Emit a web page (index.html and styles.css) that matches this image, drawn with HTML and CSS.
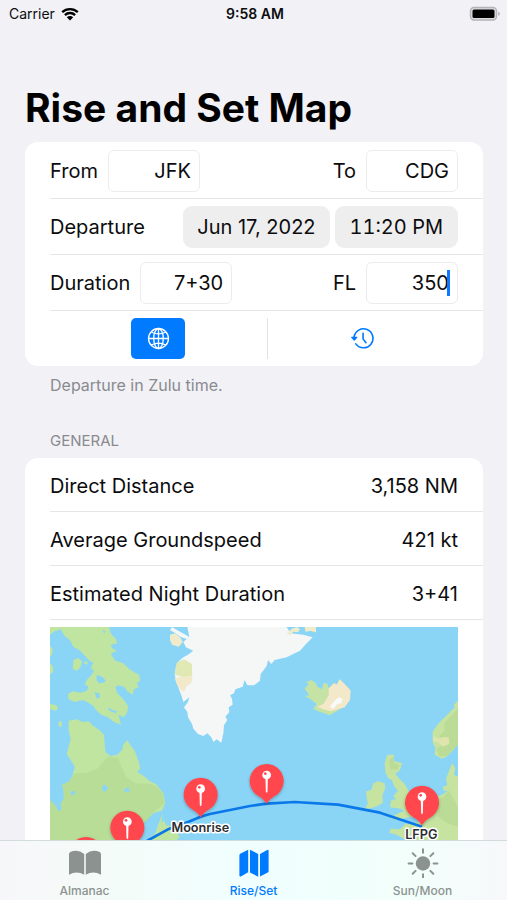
FILE: index.html
```html
<!DOCTYPE html>
<html lang="en">
<head>
<meta charset="utf-8">
<meta name="viewport" content="width=device-width, initial-scale=1">
<title>Rise and Set Map</title>
<link rel="stylesheet" href="styles.css">
</head>
<body>
<div class="app">
  <header class="status">
    <div class="carrier">
      <span>Carrier</span>
      <svg class="wifi" viewBox="0 0 18 14" aria-hidden="true">
        <path d="M1.200 5.200a11.200 11.200 0 0 1 15.600 0M3.900 8.100a7.300 7.300 0 0 1 10.200 0" fill="none" stroke="#000" stroke-width="2.300"/>
        <path d="M5.800 10.300a4.600 4.600 0 0 1 6.400 0L9 13.600z"/>
      </svg>
    </div>
    <time class="clock">9:58 AM</time>
    <div class="power">
      <svg class="battery" viewBox="0 0 32 16" aria-hidden="true">
        <rect x="1.500" y="1.500" width="26" height="12.500" rx="3.500" fill="#dcdce0" stroke="#b4b4b7" stroke-width="1.400"/>
        <rect x="3.500" y="3.500" width="22" height="8.500" rx="1.500"/>
        <path d="M29.200 5.400q1.700.8 1.700 2.300t-1.700 2.300z" fill="#b4b4b7"/>
      </svg>
    </div>
  </header>

  <main class="content">
    <h1 class="title">Rise and Set Map</h1>

    <form class="card form">
      <div class="row">
        <label for="from">From</label>
        <input class="field" id="from" type="text" value="JFK">
        <label class="push" for="to">To</label>
        <input class="field" id="to" type="text" value="CDG">
      </div>
      <div class="row">
        <span>Departure</span>
        <div class="pickers push">
          <button class="picker" type="button">Jun 17, 2022</button>
          <button class="picker time" type="button">11:20 PM</button>
        </div>
      </div>
      <div class="row">
        <label for="duration">Duration</label>
        <input class="field" id="duration" type="text" value="7+30">
        <label class="push" for="level">FL</label>
        <span class="editing"><input class="field" id="level" type="text" value="350"></span>
      </div>
      <div class="modes">
        <div class="mode">
          <button class="icon-button selected" type="button" aria-label="Zulu time">
            <svg viewBox="0 0 24 24" aria-hidden="true">
              <g fill="none" stroke="currentColor" stroke-width="1.400">
                <circle cx="12" cy="12" r="10.400"/>
                <ellipse cx="12" cy="12" rx="5" ry="10.400"/>
                <path d="M12 1.600v20.800M1.600 12h20.800M4.400 5.200q7.600 4 15.200 0M4.400 18.800q7.600-4 15.200 0"/>
              </g>
            </svg>
          </button>
        </div>
        <div class="mode">
          <button class="icon-button" type="button" aria-label="History">
            <svg viewBox="0 0 24 24" aria-hidden="true">
              <path d="M3.200 10.600A9.900 9.900 0 1 1 5 17.600" fill="none" stroke="currentColor" stroke-width="1.700" stroke-linecap="round"/>
              <path d="M12.600 6.600v5.800l3 4" fill="none" stroke="currentColor" stroke-width="1.700" stroke-linecap="round" stroke-linejoin="round"/>
              <path d="M.6 10.200h5.600q.7.200.3.900l-2.600 3q-.5.500-1 0l-2.600-3q-.4-.7.300-.9z" fill="currentColor"/>
            </svg>
          </button>
        </div>
      </div>
    </form>
    <p class="note">Departure in Zulu time.</p>

    <h2 class="section">GENERAL</h2>
    <section class="card">
      <dl class="facts">
        <div class="row"><dt>Direct Distance</dt><dd>3,158 NM</dd></div>
        <div class="row"><dt>Average Groundspeed</dt><dd>421 kt</dd></div>
        <div class="row"><dt>Estimated Night Duration</dt><dd>3+41</dd></div>
      </dl>
      <div class="map-row">
        <svg class="map" viewBox="30 21 1224 900" role="img" aria-label="Route map">
          <defs>
            <filter id="shadow" x="-30%" y="-30%" width="160%" height="160%">
              <feDropShadow dx="0" dy="4" stdDeviation="5" flood-color="#234" flood-opacity=".35"/>
            </filter>
            <g id="pin">
              <path d="M0 0C-6-10-14-17-26-24A51 51 0 1 1 26-24C14-17 6-10 0 0z" fill="#ff474e" filter="url(#shadow)"/>
              <path d="M-3.500-76h7l-1 40q-2.500 5-5 0z" fill="#fff"/>
              <circle cy="-86" r="13" fill="#fff"/>
              <circle cx="-4" cy="-90" r="4" fill="#ff474e"/>
            </g>
          </defs>
          <rect x="30" y="21" width="1224" height="900" fill="#8ad5f6"/>

          <g fill="#c0e5a0">
            <path d="M30 21H207L212 40 228 58 232 70 212 75 216 84 230 92 212 102 226 122 250 130 268 148 298 165 300 182 290 190 296 202 282 208 278 224 262 214 252 200 236 196 226 200 232 220 250 238 264 258 262 276 252 292 236 284 243 314 222 306 204 292 184 284 168 270 160 258 142 246 128 240 104 246 86 238 84 222 98 214 122 218 140 212 146 200 134 192 142 178 152 168 162 152 152 144 160 128 146 120 130 102 118 90 100 80 90 60 74 48 62 28 44 34 30 44z"/>
            <path d="M100 120l14-6 12 10-4 16-10 12-14-6 2-16zM30 78l8 8-2 18-6 4zM30 130l8 8 2 18-10 6zM134 124l10 2-4 8-8-4zM30 252l20 4 4 10-8 6-16-6zM56 304l10 2-2 16-8-4z"/>
            <path d="M86 302L108 298 130 306 146 304 160 318 178 330 192 344 194 370 196 396 212 408 232 404 246 390 250 374 262 360 270 374 284 392 298 430 300 446 292 456 312 468 328 482 350 494 370 520 376 548 366 572 340 580 320 600 300 620 286 650 292 670 320 660 346 640 356 610 368 580 364 610 372 600 378 616 392 618 420 650 400 670 360 680 320 700 280 740 260 800 240 921H30V541L46 556 54 572 64 570 62 550 72 536 70 510 66 494 88 484 98 466 104 440 92 420 80 402 86 380 92 356 86 330z"/>
          </g>
          <path d="M104 460L140 458 172 446 188 426 206 410 234 414 244 440 258 470 286 490 330 492 350 500 370 524 374 548 340 578 290 640 250 760 220 921H30V541L46 556 54 572 64 570 62 550 72 536 70 510 66 494 88 484z" fill="#a9cf83" opacity=".35"/>
          <g fill="#8ad5f6">
            <path d="M170 164l16 6 12 12-8 6-14 2-6-10zM164 216l14 4 2 12-10 4zM186 498l10-4 8 10-8 12-8-4zM254 506l12-4 4 12-18 2zM92 514l14 0 0 8-12 4zM204 262l14 8 14 4-6 6-18-8zM188 30l8 4-4 8z"/>
            <path d="M276 664l34-46 14-16 12-6-16 26-28 48z"/>
          </g>

          <path d="M442 21L448 50 430 66 438 82 460 92 444 104 430 112 416 124 408 140 404 162 410 188 418 210 424 226 430 246 448 232 444 246 432 262 442 276 444 292 456 312 460 326 474 342 490 348 502 340 514 352 520 366 530 358 544 368 550 340 552 316 562 300 556 290 568 276 566 262 578 254 576 236 570 226 582 220 586 208 608 200 614 180 622 196 642 196 660 182 662 162 680 138 684 120 694 132 704 120 740 112 780 92 798 72 818 52 790 44 770 42 752 40 740 21z" fill="#f5f6f6"/>
          <path d="M396 21l16 10 26 14 10 6-8 6-18-6-16-12-16-8z" fill="#f5f6f6"/>
          <path d="M390 44l16-4 16 14 6 12-12 14-20-6-6-14z" fill="#f0eccb"/>
          <path d="M410 128l22-10 24 14v36l-26 4-26-8z" fill="#e0e8b4"/>
          <path d="M404 174l26-4 28-2-4 20-14 10-8 18-12-8-10-16z" fill="#f2e9ca"/>
          <path d="M738 42l18-16 14-5 10 6-6 10-14-2-8 10zM794 21h34v16l-16-4-16 2z" fill="#f0eccb"/>

          <path d="M794 206l12-14-8-6 16-6 14 10 4 10 14 8 4-18 12 0 4 14 16-16 10 6 4-16 14 12 20 18-2 30-16 22-20 12-22 14-36-12-14-8 10-14-18-14-18-10 14-2z" fill="#c4e3a5"/>
          <path d="M866 206l16-16 8 4 10-16 14 14 18 20-2 28-16 22-42 12-22-6-18-8 18-8 16-26z" fill="#f4e8cb"/>
          <path d="M870 260l14-18 12-10 12 4-4 14-12 2-12 14z" fill="#fafafa"/>

          <g fill="#c6e3a0">
            <path d="M1254 254L1236 270 1218 288 1196 310 1178 334 1178 366 1186 384 1184 404 1206 416 1222 408 1240 390 1254 372z"/>
            <path d="M1240 256l14-14v28zM1236 430l10 14-4 20 12 6v42H1212l-4-12 14-4-4-20 8-20z"/>
            <path d="M1042 404L1062 404 1060 422 1086 430 1080 450 1066 462 1078 476 1094 492 1110 520 1130 540 1148 560 1140 590 1106 592 1070 600 1050 594 1078 578 1092 574 1082 566 1050 562 1054 540 1068 538 1060 528 1074 512 1062 498 1056 480 1044 474 1036 456 1034 430z"/>
            <path d="M1000 490L1014 484 1034 490 1036 504 1028 524 1028 550 1004 562 974 568 984 550 980 534 978 514 994 510z"/>
            <path d="M1254 504L1230 508 1210 522 1190 530 1182 550 1170 568 1150 590 1142 604 1120 610 1096 612 1080 628 1052 626 1048 638 1070 644 1098 660 1110 690 1120 730 1110 800 1060 820 1050 921H1254z"/>
          </g>
          <path d="M1226 512l-16 20-18 4-6 18 10 36 24 20 34 10V560zM1212 310l42-46v110l-34 34-22 0-10-20 24-20-14-20 16-16z" fill="#b5d991" opacity=".65"/>
          <path d="M1180 348l16 8 12-4 18 0 2 20-20 8-12-12-16-4z" fill="#dfe4ad"/>
          <path d="M1048 420l12-10 2 18 16 8-8 12-20 0z" fill="#b5d991" opacity=".7"/>

          <path d="M120 800L200 740 326 660 384 628 444 606 482 590 510 582 630 558 680 551 764 546 894 554 1020 578 1146 620" fill="none" stroke="#0b78ea" stroke-width="8" stroke-linejoin="round"/>
          <use href="#pin" x="1146" y="616"/>
          <use href="#pin" x="680" y="551"/>
          <use href="#pin" x="482" y="592"/>
          <use href="#pin" x="262" y="691"/>
          <use href="#pin" x="138" y="770"/>
          <g class="map-label">
            <text x="481" y="637">Moonrise</text>
            <text x="1144" y="656">LFPG</text>
          </g>
        </svg>
      </div>
    </section>
  </main>

  <nav class="tabs">
    <a class="tab" href="#almanac">
      <svg viewBox="0 0 36 30" aria-hidden="true">
        <path d="M17.200 6v20.800q-7.600-4.600-15.200 0V6.400q0-1.500 1.300-2.300 7.300-3.600 13.900 1.900zM18.800 6v20.800q7.600-4.600 15.200 0V6.400q0-1.500-1.300-2.300-7.300-3.600-13.900 1.900z" fill="currentColor"/>
      </svg>
      <span>Almanac</span>
    </a>
    <a class="tab active" href="#riseset" aria-current="page">
      <svg viewBox="0 0 36 30" aria-hidden="true">
        <path d="M12.200 1.800v22.400l-7.400 4.200q-1.400.5-1.400-1V7.200q0-1 .8-1.500zM14 1.800l8.200 4.200v22.800L14 24.400zM24 28.600V6l7.200-4q1.400-.6 1.400.9v20.300q0 .9-.8 1.400z" fill="currentColor"/>
      </svg>
      <span>Rise/Set</span>
    </a>
    <a class="tab" href="#sunmoon">
      <svg viewBox="0 0 36 30" aria-hidden="true">
        <circle cx="18" cy="15.500" r="7.200" fill="currentColor"/>
        <path d="M18 1.300v3.400M18 26.300v3.200M3.600 15.500h3.800M28.600 15.500h3.800M7.700 5.200l2.900 2.900M25.400 22.900l2.900 2.900M28.300 5.200l-2.900 2.900M10.600 22.900l-2.900 2.900" stroke="currentColor" stroke-width="2" stroke-linecap="round"/>
      </svg>
      <span>Sun/Moon</span>
    </a>
  </nav>
</div>
</body>
</html>
```
FILE: styles.css
```css
* {
  box-sizing: border-box;
}

body {
  margin: 0;
  background: #f1f1f6;
  color: #0c0c0e;
  font-family: Inter, "Liberation Sans", sans-serif;
  font-size: 20px;
  line-height: 24px;
}

button,
input {
  font: inherit;
  color: inherit;
}

.app {
  display: flex;
  flex-direction: column;
  height: 100vh;
}

.status {
  display: grid;
  grid-template-columns: 1fr auto 1fr;
  align-items: center;
  height: 28px;
  padding: 0 6px 0 9px;
  font-size: 14px;
  line-height: 20px;
}

.carrier {
  display: flex;
  align-items: center;
  gap: 6px;
}

.wifi {
  width: 18px;
  height: 14px;
}

.clock {
  font-weight: 600;
}

.power {
  display: flex;
  justify-content: flex-end;
}

.battery {
  width: 32px;
  height: 16px;
}

.content {
  flex: 1;
  min-height: 0;
  padding: 56px 24px 0 25px;
  overflow-y: auto;
  scrollbar-width: none;
}

.title {
  margin: 0 0 10px;
  color: #000;
  font-size: 39px;
  font-weight: 700;
  line-height: 48px;
}

.card {
  overflow: hidden;
  padding-left: 25px;
  border-radius: 13px;
  background: #fff;
}

.form {
  padding-top: 1px;
}

.row {
  display: flex;
  align-items: center;
  gap: 10px;
  min-height: 54px;
  padding-right: 25px;
  border-bottom: 1px solid #e6e6e8;
}

.form .row {
  min-height: 56px;
}

.push {
  margin-left: auto;
}

.field {
  display: block;
  width: 92px;
  height: 42px;
  padding: 0 8px;
  border: 1px solid #ececee;
  border-radius: 6px;
  background: #fff;
  text-align: right;
}

.editing {
  position: relative;
}

.editing::after {
  content: "";
  position: absolute;
  top: 8px;
  right: 8px;
  width: 3px;
  height: 26px;
  background: #0a7aff;
}

.pickers {
  display: flex;
  gap: 5px;
}

.picker {
  height: 42px;
  padding: 0 14px;
  border: 0;
  border-radius: 9px;
  background: #eeeeef;
}

.picker.time {
  padding: 0 15px;
  font-variant-numeric: tabular-nums;
}

.modes {
  display: grid;
  grid-template-columns: 1fr 1fr;
  padding: 7px 0;
}

.mode {
  display: flex;
  justify-content: center;
  height: 41px;
}

.mode + .mode {
  padding-right: 25px;
  border-left: 1px solid #e2e2e4;
}

.icon-button {
  display: flex;
  align-items: center;
  justify-content: center;
  width: 54px;
  padding: 0;
  border: 0;
  border-radius: 5px;
  background: none;
  color: #007aff;
}

.icon-button svg {
  width: 23px;
  height: 23px;
}

.icon-button.selected {
  background: #007aff;
  color: #fff;
}

.note,
.section {
  margin: 0;
  padding-left: 25px;
  color: #8a8a8f;
  font-size: 15px;
  font-weight: 400;
  line-height: 20px;
}

.note {
  padding-top: 9px;
  font-size: 16px;
}

.section {
  padding-top: 36px;
  padding-bottom: 7px;
}

.facts,
.facts dd {
  margin: 0;
}

.facts .row {
  justify-content: space-between;
  padding-top: 2px;
}

.map-row {
  padding: 7px 25px 7px 0;
}

.map {
  display: block;
  width: 100%;
  height: auto;
}

.map-label {
  fill: #2b2d31;
  stroke: #fff;
  stroke-width: 9px;
  stroke-linejoin: round;
  paint-order: stroke;
  font-size: 38px;
  font-weight: 600;
  text-anchor: middle;
}

.tabs {
  display: flex;
  flex: none;
  height: 60px;
  border-top: 1px solid #d3dcdc;
  background: linear-gradient(90deg, #f7f7f9, #f4fbf8 20%, #f0fffe 50%, #f2fffb 80%, #f7f8fa);
}

.tab {
  display: flex;
  flex: 1;
  flex-direction: column;
  align-items: center;
  gap: 5px;
  padding-top: 7px;
  color: #8c9290;
  font-size: 12px;
  font-weight: 500;
  line-height: 16px;
  text-decoration: none;
}

.tab svg {
  width: 36px;
  height: 30px;
}

.tab.active {
  color: #007aff;
}
```
